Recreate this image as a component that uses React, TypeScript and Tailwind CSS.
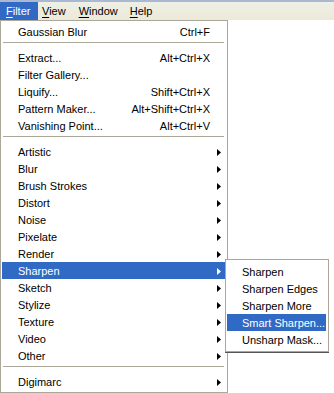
import type { ReactNode } from 'react'

type Entry =
  | { kind: 'item'; label: string; shortcut?: string; sub?: boolean; active?: boolean }
  | { kind: 'sep' }

const filterMenu: Entry[] = [
  { kind: 'item', label: 'Gaussian Blur', shortcut: 'Ctrl+F' },
  { kind: 'sep' },
  { kind: 'item', label: 'Extract...', shortcut: 'Alt+Ctrl+X' },
  { kind: 'item', label: 'Filter Gallery...' },
  { kind: 'item', label: 'Liquify...', shortcut: 'Shift+Ctrl+X' },
  { kind: 'item', label: 'Pattern Maker...', shortcut: 'Alt+Shift+Ctrl+X' },
  { kind: 'item', label: 'Vanishing Point...', shortcut: 'Alt+Ctrl+V' },
  { kind: 'sep' },
  { kind: 'item', label: 'Artistic', sub: true },
  { kind: 'item', label: 'Blur', sub: true },
  { kind: 'item', label: 'Brush Strokes', sub: true },
  { kind: 'item', label: 'Distort', sub: true },
  { kind: 'item', label: 'Noise', sub: true },
  { kind: 'item', label: 'Pixelate', sub: true },
  { kind: 'item', label: 'Render', sub: true },
  { kind: 'item', label: 'Sharpen', sub: true, active: true },
  { kind: 'item', label: 'Sketch', sub: true },
  { kind: 'item', label: 'Stylize', sub: true },
  { kind: 'item', label: 'Texture', sub: true },
  { kind: 'item', label: 'Video', sub: true },
  { kind: 'item', label: 'Other', sub: true },
  { kind: 'sep' },
  { kind: 'item', label: 'Digimarc', sub: true },
]

const sharpenMenu = ['Sharpen', 'Sharpen Edges', 'Sharpen More', 'Smart Sharpen...', 'Unsharp Mask...']

function Arrow({ light }: { light?: boolean }) {
  return (
    <svg width="4" height="7" viewBox="0 0 4 7" className="shrink-0">
      <path d="M0 0 L4 3.5 L0 7 Z" fill={light ? '#ffffff' : '#000000'} />
    </svg>
  )
}

function MenuLabel({ children, first }: { children: ReactNode; first: string }) {
  // the access-key letter is underlined, XP style
  return (
    <span>
      <span className="underline underline-offset-[2px]">{first}</span>
      {children}
    </span>
  )
}

export default function App() {
  return (
    <div
      className="relative h-[393px] w-[334px] overflow-hidden bg-white text-[11px] leading-none text-black"
      style={{ fontFamily: '"Liberation Sans", Arial, sans-serif' }}
    >
      {/* menubar */}
      <div className="flex h-[20px] items-stretch border-t-2 border-[#aab8d2] bg-gradient-to-b from-[#eef0e6] to-[#ece9d8]">
        <div className="flex w-[38px] items-center bg-[#316ac5] pl-[6px] text-white">
          <MenuLabel first="F">ilter</MenuLabel>
        </div>
        <div className="flex items-center pl-[4px]">
          <MenuLabel first="V">iew</MenuLabel>
        </div>
        <div className="flex items-center pl-[13px]">
          <MenuLabel first="W">indow</MenuLabel>
        </div>
        <div className="flex items-center pl-[12px]">
          <MenuLabel first="H">elp</MenuLabel>
        </div>
      </div>

      {/* Filter menu */}
      <div className="flex w-[228px] flex-col border border-[#aca899] bg-white py-[2px] pl-px pr-px">
        {filterMenu.map((e, i) =>
          e.kind === 'sep' ? (
            <div key={i} className="h-[9px] pt-[2px] pl-px pr-[2px]">
              <div className="h-px bg-[#aca899]" />
            </div>
          ) : (
            <div
              key={i}
              className={`flex h-[17px] items-center pl-[16px] pr-[5px] pt-px ${
                e.active ? 'bg-[#316ac5] text-white' : ''
              }`}
            >
              <span className="flex-1">{e.label}</span>
              {e.shortcut ? <span className="pr-[11px]">{e.shortcut}</span> : null}
              {e.sub ? <Arrow light={e.active} /> : null}
            </div>
          ),
        )}
      </div>

      {/* Sharpen submenu (overlay) */}
      <div className="absolute left-[225px] top-[259px] flex w-[104px] flex-col border border-[#aca899] bg-white py-[3px] pl-px pr-[2px] shadow-[0_1px_0_#555]">
        {sharpenMenu.map((label) => (
          <div
            key={label}
            className={`flex h-[17px] items-center pl-[15px] pt-px ${
              label === 'Smart Sharpen...' ? 'bg-[#316ac5] text-white' : ''
            }`}
          >
            {label}
          </div>
        ))}
      </div>
    </div>
  )
}
